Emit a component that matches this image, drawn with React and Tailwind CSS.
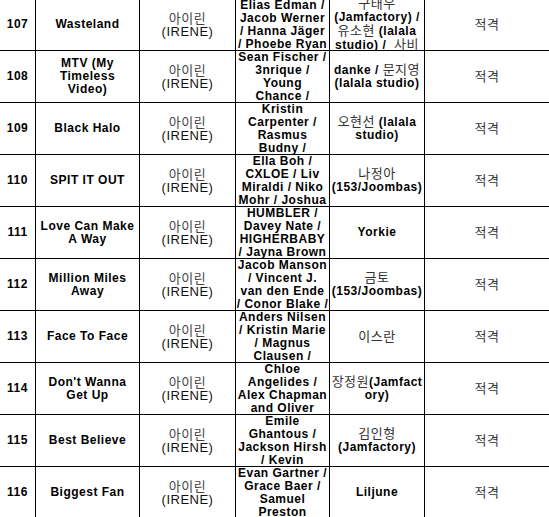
import React from "react";

const rows = [
  {
    no: "107",
    title: ["Wasteland"],
    writers: ["Elias Edman /", "Jacob Werner", "/ Hanna Jäger", "/ Phoebe Ryan"],
    arrange: ["구태우", "(Jamfactory) /", "유소현 (lalala", "studio) /  사비"],
  },
  {
    no: "108",
    title: ["MTV (My", "Timeless", "Video)"],
    writers: ["Sean Fischer /", "3nrique /", "Young", "Chance /"],
    arrange: ["danke / 문지영", "(lalala studio)"],
  },
  {
    no: "109",
    title: ["Black Halo"],
    writers: ["Kristin", "Carpenter /", "Rasmus", "Budny /"],
    arrange: ["오현선 (lalala", "studio)"],
  },
  {
    no: "110",
    title: ["SPIT IT OUT"],
    writers: ["Ella Boh /", "CXLOE / Liv", "Miraldi / Niko", "Mohr / Joshua"],
    arrange: ["나정아", "(153/Joombas)"],
  },
  {
    no: "111",
    title: ["Love Can Make", "A Way"],
    writers: ["HUMBLER /", "Davey Nate /", "HIGHERBABY", "/ Jayna Brown"],
    arrange: ["Yorkie"],
  },
  {
    no: "112",
    title: ["Million Miles", "Away"],
    writers: ["Jacob Manson", "/ Vincent J.", "van den Ende", "/ Conor Blake /"],
    arrange: ["금토", "(153/Joombas)"],
  },
  {
    no: "113",
    title: ["Face To Face"],
    writers: ["Anders Nilsen", "/ Kristin Marie", "/ Magnus", "Clausen /"],
    arrange: ["이스란"],
  },
  {
    no: "114",
    title: ["Don't Wanna", "Get Up"],
    writers: ["Chloe", "Angelides /", "Alex Chapman", "and Oliver"],
    arrange: ["장정원(Jamfact", "ory)"],
  },
  {
    no: "115",
    title: ["Best Believe"],
    writers: ["Emile", "Ghantous /", "Jackson Hirsh", "/ Kevin"],
    arrange: ["김인형", "(Jamfactory)"],
  },
  {
    no: "116",
    title: ["Biggest Fan"],
    writers: ["Evan Gartner /", "Grace Baer /", "Samuel", "Preston"],
    arrange: ["Liljune"],
  },
];

// korean runs are drawn thinner and greyer than the latin text
const Mixed = ({ text }) =>
  text.split(/([\uAC00-\uD7A3]+)/).map((part, i) =>
    /[\uAC00-\uD7A3]/.test(part) ? (
      <span key={i} className="text-[13px] font-normal text-[#333]">
        {part}
      </span>
    ) : (
      <span key={i}>{part}</span>
    )
  );

const Lines = ({ lines }) => (
  <div className="flex flex-col items-center">
    {lines.map((l, i) => (
      <div key={i} className="whitespace-pre">
        <Mixed text={l} />
      </div>
    ))}
  </div>
);

const cell =
  "flex items-center justify-center overflow-hidden border-r border-black text-center";

export default function App() {
  return (
    <div
      className="h-[517px] w-[549px] overflow-hidden bg-white text-[12px] font-bold leading-[13px] tracking-[0.5px] text-black"
      style={{ fontFamily: '"Liberation Sans", "Noto Sans CJK KR", sans-serif' }}
    >
      <div className="-mt-px">
        {rows.map((r) => (
          <div key={r.no} className="flex h-[52px] border-b border-black">
            <div className={`${cell} w-[36px] shrink-0`}>{r.no}</div>
            <div className={`${cell} w-[104px] shrink-0`}>
              <Lines lines={r.title} />
            </div>
            <div className={`${cell} w-[96px] shrink-0 font-normal text-[#111]`}>
              <div className="flex flex-col items-center">
                <div className="text-[13px] text-[#444]">아이린</div>
                <div className="text-[13px]">(IRENE)</div>
              </div>
            </div>
            <div className={`${cell} w-[94px] shrink-0`}>
              <Lines lines={r.writers} />
            </div>
            <div className={`${cell} w-[95px] shrink-0`}>
              <Lines lines={r.arrange} />
            </div>
            <div className="flex flex-1 items-center justify-center text-[13px] font-normal text-[#333]">
              적격
            </div>
          </div>
        ))}
      </div>
    </div>
  );
}
